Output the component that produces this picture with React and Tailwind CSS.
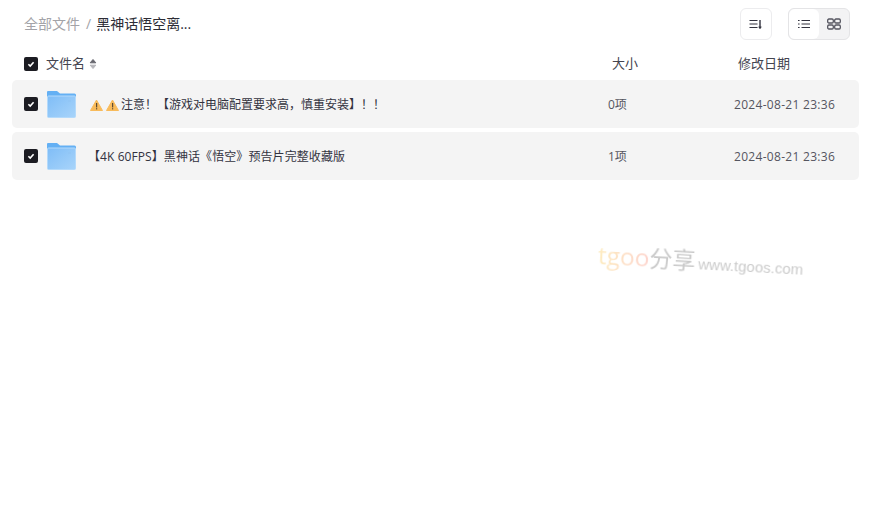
import React from 'react';

const font = { fontFamily: '"Open Sans", "Noto Sans CJK SC", sans-serif' };

const Check = () => (
  <div className="w-3.5 h-3.5 rounded-[2px] bg-[#1c1c22] flex items-center justify-center shrink-0">
    <svg width="10" height="10" viewBox="0 0 10 10">
      <path d="M2.4 5.2 4.2 7 7.6 3.2" fill="none" stroke="#fff" strokeWidth="1.6" />
    </svg>
  </div>
);

const Folder = () => (
  <svg width="29" height="27" viewBox="0 0 29 27" className="shrink-0">
    <defs>
      <linearGradient id="folderBody" x1="0" y1="0" x2="1" y2="1">
        <stop offset="0" stopColor="#7fbdf7" />
        <stop offset="1" stopColor="#a8d4fa" />
      </linearGradient>
    </defs>
    <path d="M1 0h9l3 2.5h14.5A1.5 1.5 0 0 1 29 4v3H0V1a1 1 0 0 1 1-1z" fill="#64b0f4" />
    <rect x="0.5" y="5" width="28" height="21.5" rx="1" fill="url(#folderBody)" stroke="#b4dafb" />
    <rect x="21" y="9.5" width="3" height="1" fill="#8fc4f3" />
  </svg>
);

const Warn = () => (
  <svg width="13" height="12" viewBox="0 0 13 12" className="shrink-0">
    <path d="M6.5 1 12.5 11.5H.5z" fill="#f8bb5b" stroke="#f8bb5b" strokeLinejoin="round" />
    <rect x="6" y="4" width="1.2" height="4.4" fill="#5a4a35" />
    <rect x="6" y="9.2" width="1.2" height="1.2" fill="#5a4a35" />
  </svg>
);

const rows = [
  { name: '注意！【游戏对电脑配置要求高，慎重安装】！！', warn: true, size: '0项' },
  { name: '【4K 60FPS】黑神话《悟空》预告片完整收藏版', warn: false, size: '1项' },
];

const Row = ({ name, warn, size }) => (
  <div className="h-12 rounded-[5px] bg-[#f4f4f4] flex items-center pl-3 pr-6">
    <Check />
    <div className="ml-[9px]"><Folder /></div>
    <div className={`flex-1 flex items-center text-xs text-[#33333f] pt-[2px] ${warn ? 'ml-[14px] gap-1' : 'ml-3 tracking-[0.08px]'}`}>
      {warn && <><Warn /><span className="-ml-[1px]"><Warn /></span></>}
      <span className={warn ? '-ml-[2px]' : ''}>{name}</span>
    </div>
    <div className="w-[126px] text-xs text-[#55555f] pt-[2px]">{size}</div>
    <div className="w-[101px] text-xs text-[#55555f] whitespace-nowrap tracking-[0.3px] pt-[2px]">2024-08-21 23:36</div>
  </div>
);

export default function App() {
  return (
    <div style={font} className="w-[874px] h-[514px] bg-white relative overflow-hidden">
      <div className="h-12 pt-2 pl-6 pr-6 flex items-start justify-between">
        <div className="h-8 flex items-center text-sm">
          <span className="text-[#a3a3a8]">全部文件</span>
          <span className="text-[#a3a3a8] ml-[6px] mr-[5px]">/</span>
          <span className="text-[#2c2c35]">黑神话悟空离...</span>
        </div>
        <div className="flex">
          <div className="w-8 h-8 rounded-md border border-[#ececee] flex items-center justify-center">
            <svg width="16" height="16" viewBox="0 0 16 16" fill="none" stroke="#33333f">
              <path d="M1.5 4.5h8M1.5 8h8M1.5 11.5h8" strokeWidth="1.2" />
              <path d="M12 4v8" strokeWidth="1.4" />
              <path d="M10.6 10.8 12 13l1.4-2.2z" fill="#33333f" strokeWidth="0.4" />
            </svg>
          </div>
          <div className="ml-4 w-[62px] h-8 rounded-md border border-[#e4e4e6] bg-[#f3f3f4] flex">
            <div className="w-[30px] h-full rounded-md bg-white flex items-center justify-center">
              <svg width="14" height="14" viewBox="0 0 14 14" fill="none" stroke="#33333f" strokeWidth="1.2">
                <path d="M4.5 3.5H13M4.5 7H13M4.5 10.5H13" />
                <path d="M1 3.5h1.6M1 7h1.6M1 10.5h1.6" />
              </svg>
            </div>
            <div className="flex-1 flex items-center justify-center">
              <svg width="14" height="14" viewBox="0 0 14 14" fill="none" stroke="#55555f" strokeWidth="1.3">
                <rect x="0.7" y="2" width="5.6" height="4" rx="1.2" />
                <rect x="7.7" y="2" width="5.6" height="4" rx="1.2" />
                <rect x="0.7" y="8" width="5.6" height="4" rx="1.2" />
                <rect x="7.7" y="8" width="5.6" height="4" rx="1.2" />
              </svg>
            </div>
          </div>
        </div>
      </div>

      <div className="h-8 flex items-center pl-6 text-[13px] text-[#44444f]">
        <Check />
        <span className="ml-2">文件名</span>
        <svg width="8" height="12" viewBox="0 0 8 12" className="ml-[4px]" strokeLinejoin="round">
          <path d="M4 1.5 6.8 4.8H1.2z" fill="#66666e" stroke="#66666e" />
          <path d="M4 10.5 1.2 7.2h5.6z" fill="#b5b5ba" stroke="#b5b5ba" />
        </svg>
        <span className="ml-[515px] w-[126px]">大小</span>
        <span>修改日期</span>
      </div>

      <div className="pl-3 pr-[15px] flex flex-col gap-1">
        {rows.map((r) => <Row key={r.name} {...r} />)}
      </div>

      {/* watermark */}
      <div className="absolute left-[598px] top-[239px] flex items-baseline rotate-[3deg] origin-left whitespace-nowrap opacity-90 blur-[0.3px]">
        <span className="text-[24.5px] leading-[32px] bg-linear-to-r from-[#fdeab8] to-[#fdcfc8] bg-clip-text text-transparent">tgoo</span>
        <span className="text-[23px] leading-[32px] text-[#c4c4c4]">分享</span>
        <span className="ml-[3px] text-[15px] leading-[32px] text-[#c6c6c6]" style={{ fontFamily: '"Liberation Sans", sans-serif' }}>www.tgoos.com</span>
      </div>
    </div>
  );
}
